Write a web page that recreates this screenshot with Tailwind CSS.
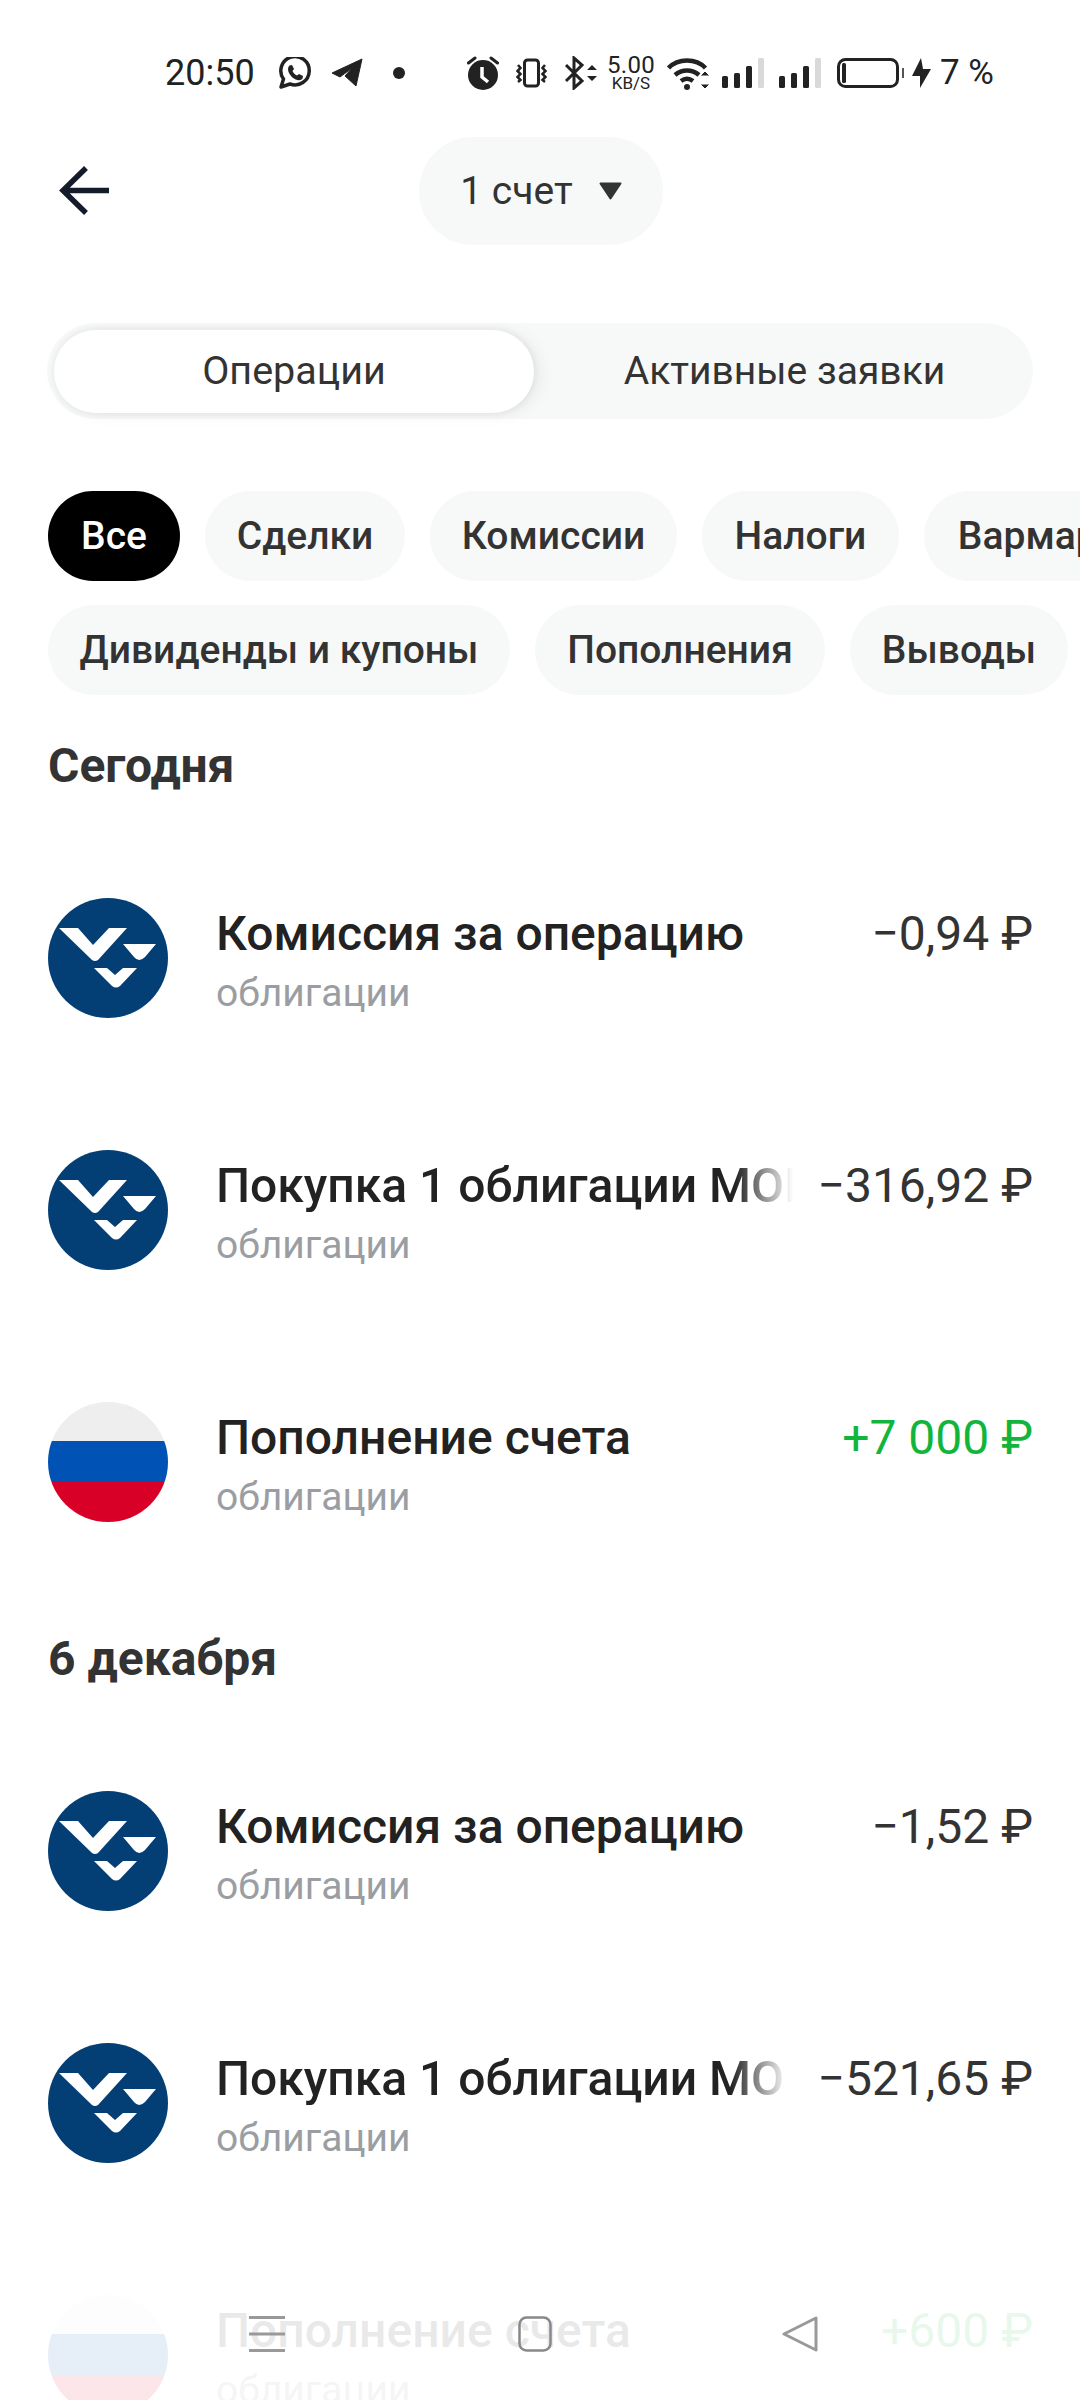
<!DOCTYPE html>
<html lang="ru">
  <head>
    <meta charset="UTF-8" />
    <meta name="viewport" content="width=device-width, initial-scale=1.0" />
    <title>Операции</title>
    <script src="https://cdn.jsdelivr.net/npm/@tailwindcss/browser@4"></script>
  </head>
  <body class="bg-white">
    <div class="relative w-[1080px] h-[2400px] overflow-hidden bg-white font-['Roboto',sans-serif]">
      <!-- status bar -->
      <div class="h-[137px] pt-[55px] pl-[165px] flex items-start text-[#222]">
        <div class="h-[35px] flex items-center">
          <span class="text-[36px] leading-none w-[113px] shrink-0">20:50</span>
          <svg class="w-[34px] h-[32px] shrink-0" viewBox="0 0 34 32"><path d="M3 30l2.500-8A14.200 14.200 0 1 1 12 27z" fill="none" stroke="#222" stroke-width="3.500" stroke-linejoin="round"/><path d="M11.500 8.500l2.500-.5 2 4-1.500 2c1 2 2.500 3.500 4.500 4.500l2-1.500 4 2-.5 2.500c-1 1.500-3 2-5 1.500C14.500 22 10.500 17 10 12.500c0-1.500.5-3 1.500-4z" fill="#222"/></svg>
          <svg class="ml-[19px] w-[32px] h-[29px] shrink-0" viewBox="0 0 32 29" fill="#222" stroke="#222" stroke-width="1" stroke-linejoin="round"><path d="M1 15L31 1l-6 27-11-10 7-8-12 9z"/></svg>
          <span class="ml-[30px] w-[12px] h-[12px] shrink-0 rounded-full bg-[#222]"></span>
          <svg class="ml-[62px] w-[32px] h-[34px] shrink-0" viewBox="0 0 32 34"><circle cx="16" cy="19" r="15" fill="#222"/><path d="M1.500 7L8 2M24 2l6.500 5" stroke="#222" stroke-width="3" stroke-linecap="round"/><path d="M15 11v10l6 5" stroke="#fff" stroke-width="3.500" fill="none"/></svg>
          <svg class="ml-[17px] w-[31px] h-[30px] shrink-0" viewBox="0 0 31 30" fill="none" stroke="#222" stroke-width="2.500"><rect x="8.500" y="2" width="14" height="26" rx="3" stroke-width="3"/><path d="M2 7l2.500 3L1.500 13l3 3-3 3 3 3L2 24M29 7l-2.500 3 3 3-3 3 3 3-3 3 2.500 2"/></svg>
          <svg class="ml-[17px] w-[33px] h-[34px] shrink-0" viewBox="0 0 33 34" fill="none" stroke="#222" stroke-width="3"><path d="M2 9l16 16-8 7V2l8 7L2 25"/><path d="M28 9l5 5H23zM28 25l5-5H23z" fill="#222" stroke="none"/></svg>
          <span class="ml-[9px] w-[50px] shrink-0 flex flex-col items-center font-normal"><span class="text-[24px] leading-[20px] tracking-[0.3px]">5.00</span><span class="text-[17px] leading-[16px]">KB/S</span></span>
          <svg class="ml-[11px] w-[43px] h-[34px] shrink-0" viewBox="0 0 43 34" fill="none" stroke="#222" stroke-width="4.500"><path d="M1.500 12C11 2 29 2 38.500 12M8 19c7-6 17-6 24 0M14 25c4-3 8-3 12 0"/><circle cx="20" cy="31" r="3" fill="#222" stroke="none"/><path d="M38 15l5 5H33zM38 33l5-5H33z" fill="#222" stroke="#fff" stroke-width="1"/></svg>
          <svg class="ml-[12px] w-[42px] h-[30px] shrink-0" viewBox="0 0 42 30"><rect x="0" y="18" width="6" height="12" rx="1.500" fill="#222"/><rect x="12" y="15" width="6" height="15" rx="1.500" fill="#222"/><rect x="24" y="8" width="6" height="22" rx="1.500" fill="#222"/><rect x="36" y="0" width="6" height="30" rx="1.500" fill="#d9d9d9"/></svg>
          <svg class="ml-[15px] w-[42px] h-[30px] shrink-0" viewBox="0 0 42 30"><rect x="0" y="18" width="6" height="12" rx="1.500" fill="#222"/><rect x="12" y="15" width="6" height="15" rx="1.500" fill="#222"/><rect x="24" y="8" width="6" height="22" rx="1.500" fill="#222"/><rect x="36" y="0" width="6" height="30" rx="1.500" fill="#d9d9d9"/></svg>
          <svg class="ml-[16px] w-[67px] h-[30px] shrink-0" viewBox="0 0 67 30" fill="none"><rect x="1.500" y="1.500" width="59" height="27" rx="7" stroke="#222" stroke-width="3"/><rect x="5" y="5" width="4" height="20" rx="1.500" fill="#222"/><rect x="65" y="10" width="2" height="10" fill="#555"/></svg>
          <svg class="ml-[8px] w-[19px] h-[30px] shrink-0" viewBox="0 0 19 30" fill="#222"><path d="M9 0L0 18h8v12L19 11h-8z"/></svg>
          <span class="ml-[9px] text-[35px] leading-none whitespace-nowrap">7 %</span>
        </div>
      </div>

      <!-- header -->
      <div class="relative h-[108px] flex justify-center">
        <svg class="absolute left-[58px] top-[29px] w-[54px] h-[49px]" viewBox="0 0 54 49" fill="none" stroke="#141b2b" stroke-width="5.500"><path d="M28 2L5 24.500 28 47M5 24.500h46"/></svg>
        <div class="ml-[2px] w-[244px] rounded-full bg-[#f7f9f8] flex items-center justify-center text-[#333] text-[39px]">
          <span>1 счет</span>
          <svg class="ml-[26px] w-[23px] h-[18px]" viewBox="0 0 23 18" fill="#333" stroke="#333" stroke-width="2" stroke-linejoin="round"><path d="M1.500 1.500h20L11.500 16.500z"/></svg>
        </div>
      </div>

      <!-- tabs -->
      <div class="mt-[78px] mx-[47px] h-[96px] rounded-full bg-[#f7f9f8] flex items-center pl-[7px] text-[#333]">
        <div class="w-[480px] h-[83px] rounded-full bg-white text-[39.500px] shadow-[0_0_5px_3px_rgba(0,0,0,0.04),8px_2px_16px_rgba(0,0,0,0.05)] flex items-center justify-center">Операции</div>
        <div class="flex-1 text-center text-[39px] pl-[2px]">Активные заявки</div>
      </div>

      <!-- filter chips -->
      <div class="mt-[72px] pl-[48px] flex gap-[25px] text-[39px] font-medium text-[#333] whitespace-nowrap">
        <span class="h-[90px] w-[132px] shrink-0 rounded-full bg-black text-white flex items-center justify-center">Все</span>
        <span class="h-[90px] w-[200px] shrink-0 rounded-full bg-[#f7f9f8] flex items-center justify-center">Сделки</span>
        <span class="h-[90px] w-[247px] shrink-0 rounded-full bg-[#f7f9f8] flex items-center justify-center">Комиссии</span>
        <span class="h-[90px] w-[197px] shrink-0 rounded-full bg-[#f7f9f8] flex items-center justify-center">Налоги</span>
        <span class="h-[90px] w-[260px] shrink-0 rounded-full bg-[#f7f9f8] flex items-center justify-center">Вармаржа</span>
      </div>
      <div class="mt-[24px] pl-[48px] flex gap-[25px] text-[39px] font-medium text-[#333] whitespace-nowrap">
        <span class="h-[90px] w-[462px] shrink-0 rounded-full bg-[#f7f9f8] flex items-center justify-center">Дивиденды и купоны</span>
        <span class="h-[90px] w-[290px] shrink-0 rounded-full bg-[#f7f9f8] flex items-center justify-center">Пополнения</span>
        <span class="h-[90px] w-[218px] shrink-0 rounded-full bg-[#f7f9f8] flex items-center justify-center">Выводы</span>
      </div>

      <!-- today -->
      <h2 class="mt-[47px] h-[48px] leading-[48px] pl-[48px] text-[48px] font-bold text-[#333]">Сегодня</h2>

      <div class="mt-[108px] pl-[48px] pr-[47px] flex flex-col gap-[132px]">
        <div class="flex h-[120px]">
          <svg class="w-[120px] h-[120px] shrink-0" viewBox="0 0 120 120"><circle cx="60" cy="60" r="60" fill="#033f75"/><path d="M11 30h19l15 17 16-17h18L50 62q-3 2-6 0zM75 46h33L97 59q-6 6-11 0zM46 70h13l8 7 8-7h14L72 88q-4 3-8 0z" fill="#fff"/></svg>
          <div class="ml-[48px] flex-1 min-w-0 pt-[10px]">
            <div class="text-[48px] leading-[52px] font-medium text-[#222] whitespace-nowrap">Комиссия за операцию</div>
            <div class="mt-[11px] text-[39px] leading-[44px] text-[#9a9ea3]">облигации</div>
          </div>
          <div class="pt-[10px] text-[48px] leading-[52px] text-[#333] whitespace-nowrap">−0,94 ₽</div>
        </div>
        <div class="flex h-[120px]">
          <svg class="w-[120px] h-[120px] shrink-0" viewBox="0 0 120 120"><circle cx="60" cy="60" r="60" fill="#033f75"/><path d="M11 30h19l15 17 16-17h18L50 62q-3 2-6 0zM75 46h33L97 59q-6 6-11 0zM46 70h13l8 7 8-7h14L72 88q-4 3-8 0z" fill="#fff"/></svg>
          <div class="ml-[48px] flex-1 min-w-0 pt-[10px]">
            <div class="w-[577px] overflow-hidden text-[48px] leading-[52px] font-medium whitespace-nowrap text-transparent bg-clip-text bg-gradient-to-r from-[#222] from-[90%] to-transparent">Покупка 1 облигации МОНОПОЛИЯ</div>
            <div class="mt-[11px] text-[39px] leading-[44px] text-[#9a9ea3]">облигации</div>
          </div>
          <div class="pt-[10px] text-[48px] leading-[52px] text-[#333] whitespace-nowrap">−316,92 ₽</div>
        </div>
        <div class="flex h-[120px]">
          <div class="w-[120px] h-[120px] shrink-0 rounded-full overflow-hidden flex flex-col">
            <div class="h-[39px] bg-[#eeeeee]"></div>
            <div class="h-[41px] bg-[#0052b4]"></div>
            <div class="h-[40px] bg-[#d80027]"></div>
          </div>
          <div class="ml-[48px] flex-1 min-w-0 pt-[10px]">
            <div class="text-[48px] leading-[52px] font-medium text-[#222] whitespace-nowrap">Пополнение счета</div>
            <div class="mt-[11px] text-[39px] leading-[44px] text-[#9a9ea3]">облигации</div>
          </div>
          <div class="pt-[10px] text-[48px] leading-[52px] text-[#12b53c] whitespace-nowrap">+7 000 ₽</div>
        </div>
      </div>

      <!-- 6 december -->
      <h2 class="mt-[113px] h-[48px] leading-[48px] pl-[48px] text-[48px] font-bold text-[#333]">6 декабря</h2>

      <div class="mt-[108px] pl-[48px] pr-[47px] flex flex-col gap-[132px]">
        <div class="flex h-[120px]">
          <svg class="w-[120px] h-[120px] shrink-0" viewBox="0 0 120 120"><circle cx="60" cy="60" r="60" fill="#033f75"/><path d="M11 30h19l15 17 16-17h18L50 62q-3 2-6 0zM75 46h33L97 59q-6 6-11 0zM46 70h13l8 7 8-7h14L72 88q-4 3-8 0z" fill="#fff"/></svg>
          <div class="ml-[48px] flex-1 min-w-0 pt-[10px]">
            <div class="text-[48px] leading-[52px] font-medium text-[#222] whitespace-nowrap">Комиссия за операцию</div>
            <div class="mt-[11px] text-[39px] leading-[44px] text-[#9a9ea3]">облигации</div>
          </div>
          <div class="pt-[10px] text-[48px] leading-[52px] text-[#333] whitespace-nowrap">−1,52 ₽</div>
        </div>
        <div class="flex h-[120px]">
          <svg class="w-[120px] h-[120px] shrink-0" viewBox="0 0 120 120"><circle cx="60" cy="60" r="60" fill="#033f75"/><path d="M11 30h19l15 17 16-17h18L50 62q-3 2-6 0zM75 46h33L97 59q-6 6-11 0zM46 70h13l8 7 8-7h14L72 88q-4 3-8 0z" fill="#fff"/></svg>
          <div class="ml-[48px] flex-1 min-w-0 pt-[10px]">
            <div class="w-[572px] overflow-hidden text-[48px] leading-[52px] font-medium whitespace-nowrap text-transparent bg-clip-text bg-gradient-to-r from-[#222] from-[90%] to-transparent">Покупка 1 облигации МОНОПОЛИЯ</div>
            <div class="mt-[11px] text-[39px] leading-[44px] text-[#9a9ea3]">облигации</div>
          </div>
          <div class="pt-[10px] text-[48px] leading-[52px] text-[#333] whitespace-nowrap">−521,65 ₽</div>
        </div>
        <div class="flex h-[120px]">
          <div class="w-[120px] h-[120px] shrink-0 rounded-full overflow-hidden flex flex-col">
            <div class="h-[39px] bg-[#eeeeee]"></div>
            <div class="h-[41px] bg-[#0052b4]"></div>
            <div class="h-[40px] bg-[#d80027]"></div>
          </div>
          <div class="ml-[48px] flex-1 min-w-0 pt-[10px]">
            <div class="text-[48px] leading-[52px] font-medium text-[#222] whitespace-nowrap">Пополнение счета</div>
            <div class="mt-[11px] text-[39px] leading-[44px] text-[#9a9ea3]">облигации</div>
          </div>
          <div class="pt-[10px] text-[48px] leading-[52px] text-[#12b53c] whitespace-nowrap">+600 ₽</div>
        </div>
      </div>

      <!-- fade + system nav over the list -->
      <div class="absolute left-0 right-0 bottom-0 h-[140px] bg-gradient-to-b from-white/0 from-0% to-white/90 to-[25%]"></div>
      <div class="absolute left-0 right-0 top-[2316px]">
        <svg class="absolute left-[249px] top-0 w-[36px] h-[36px]" viewBox="0 0 36 36" fill="none" stroke="#999" stroke-width="3"><path d="M0 1.500h36M0 18h36M0 34.500h36"/></svg>
        <svg class="absolute left-[518px] top-0 w-[34px] h-[36px]" viewBox="0 0 34 36" fill="none" stroke="#888" stroke-width="2.500"><rect x="1.500" y="1.500" width="31" height="33" rx="7"/></svg>
        <svg class="absolute left-[782px] top-0 w-[36px] h-[36px]" viewBox="0 0 36 36" fill="none" stroke="#999" stroke-width="3" stroke-linejoin="round"><path d="M34 2v32L2 18z"/></svg>
      </div>
    </div>
  </body>
</html>
